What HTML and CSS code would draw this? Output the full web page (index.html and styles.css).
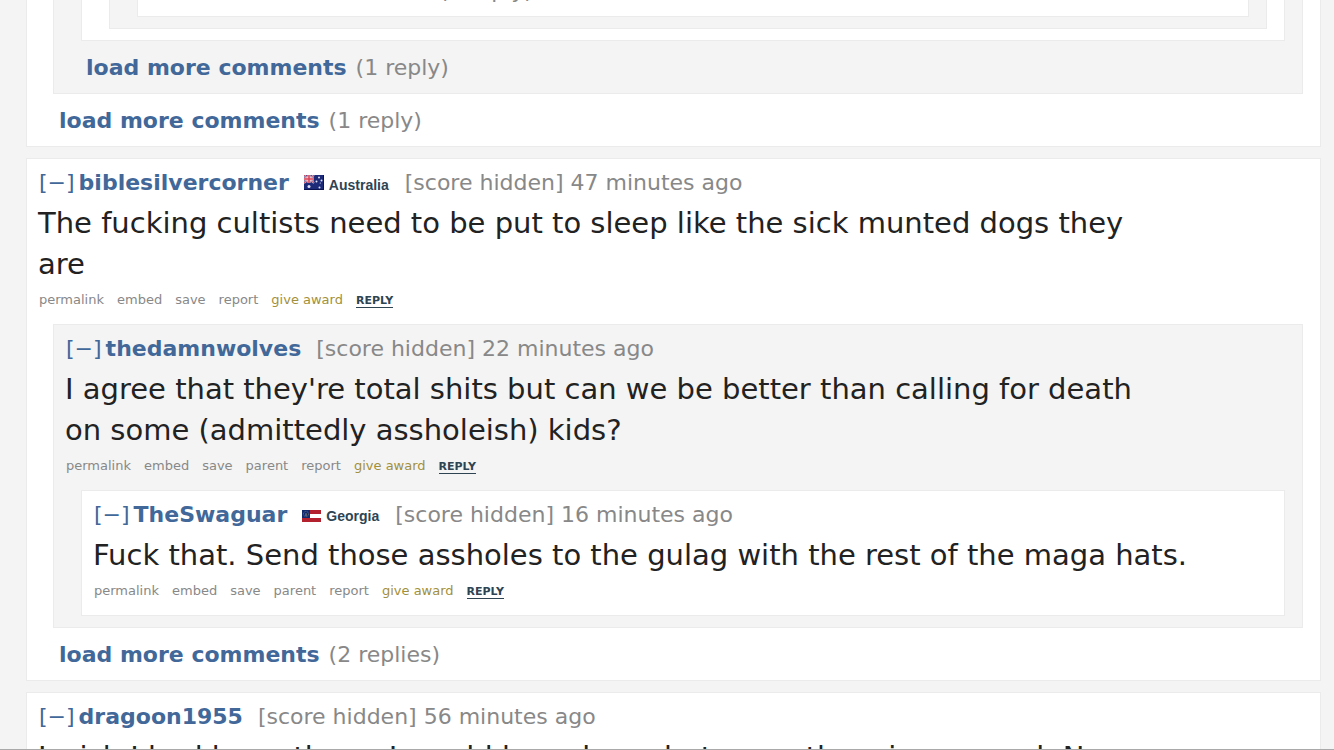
FILE: index.html
```html
<!DOCTYPE html>
<html lang="en">
<head>
  <meta charset="UTF-8">
  <meta name="viewport" content="width=device-width, initial-scale=1.0">
  <title>Comments</title>
  <link rel="stylesheet" href="styles.css">
</head>
<body>
  <main class="thread">
    <article class="comment">
      <div class="comment">
        <div class="comment">
          <div class="comment">
            <div class="comment">
              <p class="more"><a href="#">load more comments</a> (1 reply)</p>
            </div>
          </div>
        </div>
        <p class="more"><a href="#">load more comments</a> (1 reply)</p>
      </div>
      <p class="more"><a href="#">load more comments</a> (1 reply)</p>
    </article>

    <article class="comment">
      <p class="tagline">
        <a class="expand" href="#">[−]</a>
        <a class="author" href="#">biblesilvercorner</a>
        <span class="flair">
          <svg width="20" height="15" viewBox="0 0 20 15">
            <rect width="20" height="15" fill="#1c2a78"/>
            <path d="M0 0l10 8M10 0L0 8" stroke="#c9c4e0" stroke-width="2"/>
            <path d="M0 0l10 8M10 0L0 8" stroke="#d8485a" stroke-width="1"/>
            <path d="M5 0v8M0 4h10" stroke="#f4d6da" stroke-width="3"/>
            <path d="M5 0v8M0 4h10" stroke="#dc4355" stroke-width="1.6"/>
            <g fill="#dfe3f5">
              <circle cx="5" cy="11.5" r="1.5"/>
              <circle cx="15" cy="2.5" r="1"/>
              <circle cx="12.5" cy="6.5" r="1"/>
              <circle cx="17.5" cy="5.5" r="1"/>
              <circle cx="15.5" cy="12.5" r="1"/>
              <circle cx="16.3" cy="8" r=".6"/>
            </g>
            <path d="M0 14.5h20M19.5 0v15" stroke="#0c1450" stroke-width="1"/>
          </svg>
          Australia
        </span>
        <span>[score hidden] 47 minutes ago</span>
      </p>
      <p class="body">The fucking cultists need to be put to sleep like the sick munted dogs they are</p>
      <ul class="buttons">
        <li><a href="#">permalink</a></li>
        <li><a href="#">embed</a></li>
        <li><a href="#">save</a></li>
        <li><a href="#">report</a></li>
        <li><a class="award" href="#">give award</a></li>
        <li><a class="reply" href="#">REPLY</a></li>
      </ul>

      <div class="comment">
        <p class="tagline">
          <a class="expand" href="#">[−]</a>
          <a class="author" href="#">thedamnwolves</a>
          <span>[score hidden] 22 minutes ago</span>
        </p>
        <p class="body">I agree that they're total shits but can we be better than calling for death on some (admittedly assholeish) kids?</p>
        <ul class="buttons">
          <li><a href="#">permalink</a></li>
          <li><a href="#">embed</a></li>
          <li><a href="#">save</a></li>
          <li><a href="#">parent</a></li>
          <li><a href="#">report</a></li>
          <li><a class="award" href="#">give award</a></li>
          <li><a class="reply" href="#">REPLY</a></li>
        </ul>

        <div class="comment">
          <p class="tagline">
            <a class="expand" href="#">[−]</a>
            <a class="author" href="#">TheSwaguar</a>
            <span class="flair state">
              <svg width="19" height="12" viewBox="0 0 19 12">
                <rect width="19" height="12" fill="#b3202e"/>
                <rect y="4" width="19" height="4" fill="#fff"/>
                <rect width="8" height="8" fill="#122a6b"/>
                <circle cx="4" cy="4" r="2.6" fill="none" stroke="#6d7896" stroke-width=".8" stroke-dasharray="1 .6"/>
                <path d="M3 5.2h2M4 3v2" stroke="#8a8a72" stroke-width=".8"/>
              </svg>
              Georgia
            </span>
            <span>[score hidden] 16 minutes ago</span>
          </p>
          <p class="body">Fuck that. Send those assholes to the gulag with the rest of the maga hats.</p>
          <ul class="buttons">
            <li><a href="#">permalink</a></li>
            <li><a href="#">embed</a></li>
            <li><a href="#">save</a></li>
            <li><a href="#">parent</a></li>
            <li><a href="#">report</a></li>
            <li><a class="award" href="#">give award</a></li>
            <li><a class="reply" href="#">REPLY</a></li>
          </ul>
        </div>
      </div>
      <p class="more"><a href="#">load more comments</a> (2 replies)</p>
    </article>

    <article class="comment">
      <p class="tagline">
        <a class="expand" href="#">[−]</a>
        <a class="author" href="#">dragoon1955</a>
        <span>[score hidden] 56 minutes ago</span>
      </p>
      <p class="body">I wish I had been there. I would have been but more throwing around. No</p>
    </article>
  </main>
</body>
</html>
```
FILE: styles.css
```css
* {
  box-sizing: border-box;
}
html {
  height: 100%;
  overflow: hidden;
}
body {
  height: 100%;
  margin: 0;
  overflow: hidden;
  background: #f4f4f4;
  border-bottom: 1px solid #a9a9a9;
  font-family: Verdana, "DejaVu Sans", sans-serif;
  font-size: 22px;
  color: #888;
}
p, ul {
  margin: 0;
  padding: 0;
}
a {
  color: #416899;
  text-decoration: none;
}
.thread {
  margin: -41px 13px 0 26px;
}
.comment {
  background: #fff;
  border: 1px solid #ebebeb;
  margin-bottom: 11px;
}
.comment .comment {
  background: #f4f4f4;
  margin: 0 17px 11px 26px;
}
.comment .comment .comment {
  background: #fff;
  margin-left: 27px;
}
.comment .comment .comment .comment {
  background: #f4f4f4;
}
.comment .comment .comment .comment .comment {
  background: #fff;
}
.comment + .more {
  margin-top: -11px;
}
.more {
  padding: 1px 0 0 32px;
  line-height: 51px;
}
.more a, .author {
  font-weight: bold;
}
.more a {
  margin-right: 2px;
}
.tagline {
  display: flex;
  align-items: baseline;
  padding: 9px 0 0 12px;
  line-height: 30px;
}
.author {
  margin: 0 15px 0 4px;
}
.flair {
  display: inline-flex;
  align-items: baseline;
  gap: 5px;
  margin-right: 16px;
  font-family: Arial, "Liberation Sans", sans-serif;
  font-size: 14px;
  font-weight: bold;
  line-height: 16px;
  color: #2e4453;
}
.state {
  align-items: center;
}
.body {
  max-width: 1115px;
  padding: 5px 0 0 11px;
  font-size: 29px;
  line-height: 41px;
  color: #222;
}
.buttons {
  display: flex;
  gap: 13px;
  padding: 2px 0 11px 12px;
  list-style: none;
  font-size: 13px;
  line-height: 25px;
}
.buttons a {
  color: #888;
}
.buttons .award {
  color: #a2903a;
}
.buttons .reply {
  border-bottom: 1px solid #2e4453;
  font-size: 11px;
  font-weight: bold;
  color: #2e4453;
}
```
